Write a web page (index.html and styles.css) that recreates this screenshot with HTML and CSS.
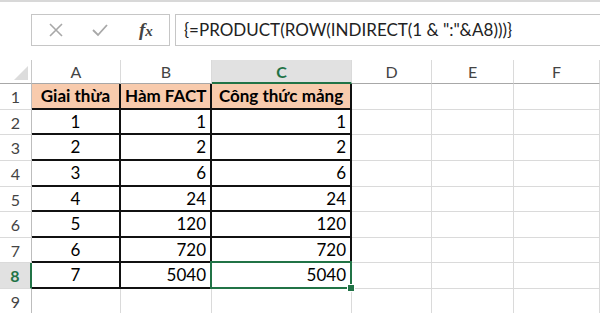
FILE: index.html
```html
<!DOCTYPE html>
<html lang="en">
<head>
    <meta charset="UTF-8">
    <title>Giai thừa - công thức mảng</title>
    <link rel="stylesheet" href="styles.css">
</head>
<body>
    <div class="formula-bar">
        <div class="fx-box">
            <svg class="icon" width="16" height="14" viewBox="0 0 16 14"><path d="M2 1 L14 13 M14 1 L2 13" stroke="#a8a8a8" stroke-width="1.6" fill="none"/></svg>
            <svg class="icon" width="16" height="14" viewBox="0 0 16 14"><path d="M1 7 L6 12 L15 2" stroke="#a8a8a8" stroke-width="1.8" fill="none"/></svg>
            <span class="fx">f<small>x</small></span>
        </div>
        <div class="formula">{=PRODUCT(ROW(INDIRECT(1 &amp; ":"&amp;A8)))}</div>
    </div>

    <div class="sheet">
        <div class="corner"><span class="tri"></span></div>
        <div class="colhead">A</div>
        <div class="colhead">B</div>
        <div class="colhead active">C</div>
        <div class="colhead">D</div>
        <div class="colhead">E</div>
        <div class="colhead">F</div>

        <div class="rowhead">1</div>
        <div class="cell t th center">Giai thừa</div>
        <div class="cell t th">Hàm FACT</div>
        <div class="cell t th">Công thức mảng</div>
        <div class="cell"></div><div class="cell"></div><div class="cell"></div>

        <div class="rowhead">2</div>
        <div class="cell t center">1</div><div class="cell t num">1</div><div class="cell t num">1</div>
        <div class="cell"></div><div class="cell"></div><div class="cell"></div>

        <div class="rowhead">3</div>
        <div class="cell t center">2</div><div class="cell t num">2</div><div class="cell t num">2</div>
        <div class="cell"></div><div class="cell"></div><div class="cell"></div>

        <div class="rowhead">4</div>
        <div class="cell t center">3</div><div class="cell t num">6</div><div class="cell t num">6</div>
        <div class="cell"></div><div class="cell"></div><div class="cell"></div>

        <div class="rowhead">5</div>
        <div class="cell t center">4</div><div class="cell t num">24</div><div class="cell t num">24</div>
        <div class="cell"></div><div class="cell"></div><div class="cell"></div>

        <div class="rowhead">6</div>
        <div class="cell t center">5</div><div class="cell t num">120</div><div class="cell t num">120</div>
        <div class="cell"></div><div class="cell"></div><div class="cell"></div>

        <div class="rowhead">7</div>
        <div class="cell t center">6</div><div class="cell t num">720</div><div class="cell t num">720</div>
        <div class="cell"></div><div class="cell"></div><div class="cell"></div>

        <div class="rowhead active">8</div>
        <div class="cell t center">7</div><div class="cell t num">5040</div><div class="cell t num selected">5040<span class="handle"></span></div>
        <div class="cell"></div><div class="cell"></div><div class="cell"></div>

        <div class="rowhead">9</div>
        <div class="cell"></div><div class="cell"></div><div class="cell"></div>
        <div class="cell"></div><div class="cell"></div><div class="cell"></div>
    </div>
</body>
</html>
```

FILE: styles.css
```css
body { margin: 0; background: #fff; font-family: Lato, "Open Sans", sans-serif; color: #000; overflow: hidden; }

.formula-bar { display: flex; gap: 5px; height: 60px; box-sizing: border-box; border-top: 2px solid #d8d8d8; padding: 12px 0 0 31px; }
.fx-box { width: 139px; height: 32px; box-sizing: border-box; border: 1px solid #c6c6c6; display: flex; align-items: center; gap: 28px; padding-left: 16px; }
.icon { display: block; }
.fx { font-family: "Liberation Serif", serif; font-style: italic; font-weight: bold; font-size: 19px; color: #444; margin-left: 3px; }
.fx small { font-size: 15px; }
.formula { flex: 1; height: 32px; box-sizing: border-box; border: 1px solid #c6c6c6; border-right: none; padding-left: 8px; line-height: 30px; font-size: 17px; color: #222; white-space: nowrap; }

.sheet { display: grid; grid-template-columns: 32px 89px 91px 140px 80px 82px 86px; grid-template-rows: 24px repeat(8, 25.625px) 30px; }
.sheet > div { box-sizing: border-box; white-space: nowrap; }

.corner { border-right: 1px solid #c8c8c8; border-bottom: 1px solid #a8a8a8; position: relative; }
.tri { position: absolute; right: 3px; bottom: 3px; width: 0; height: 0; border-left: 14px solid transparent; border-bottom: 14px solid #dcdcdc; }

.colhead { border-right: 1px solid #dadada; border-bottom: 1px solid #a8a8a8; text-align: center; line-height: 23px; font-size: 16px; color: #444; }
.colhead.active { background: #e1e1e1; color: #217346; border-bottom: 2px solid #217346; font-weight: bold; }

.rowhead { border-right: 1px solid #bdbdbd; border-bottom: 1px solid #dadada; text-align: center; line-height: 25px; font-size: 16px; color: #444; }
.rowhead.active { background: #e1e1e1; color: #217346; font-weight: bold; border-right: 2px solid #217346; }

.cell { border-right: 1px solid #dadada; border-bottom: 1px solid #dadada; font-size: 17px; line-height: 24px; padding: 0 4px; }
.cell.t { border-right: 2px solid #111; border-bottom: 2px solid #111; }
.th { background: #f8cbad; font-weight: bold; text-align: center; }
.center { text-align: center; }
.num { text-align: right; }

.selected { position: relative; }
.selected::after { content: ""; position: absolute; left: -2px; top: -2px; right: -2px; bottom: -2px; border: 2px solid #217346; }
.handle { position: absolute; right: -5px; bottom: -5px; width: 6px; height: 6px; background: #217346; border: 1px solid #fff; z-index: 1; }
```
